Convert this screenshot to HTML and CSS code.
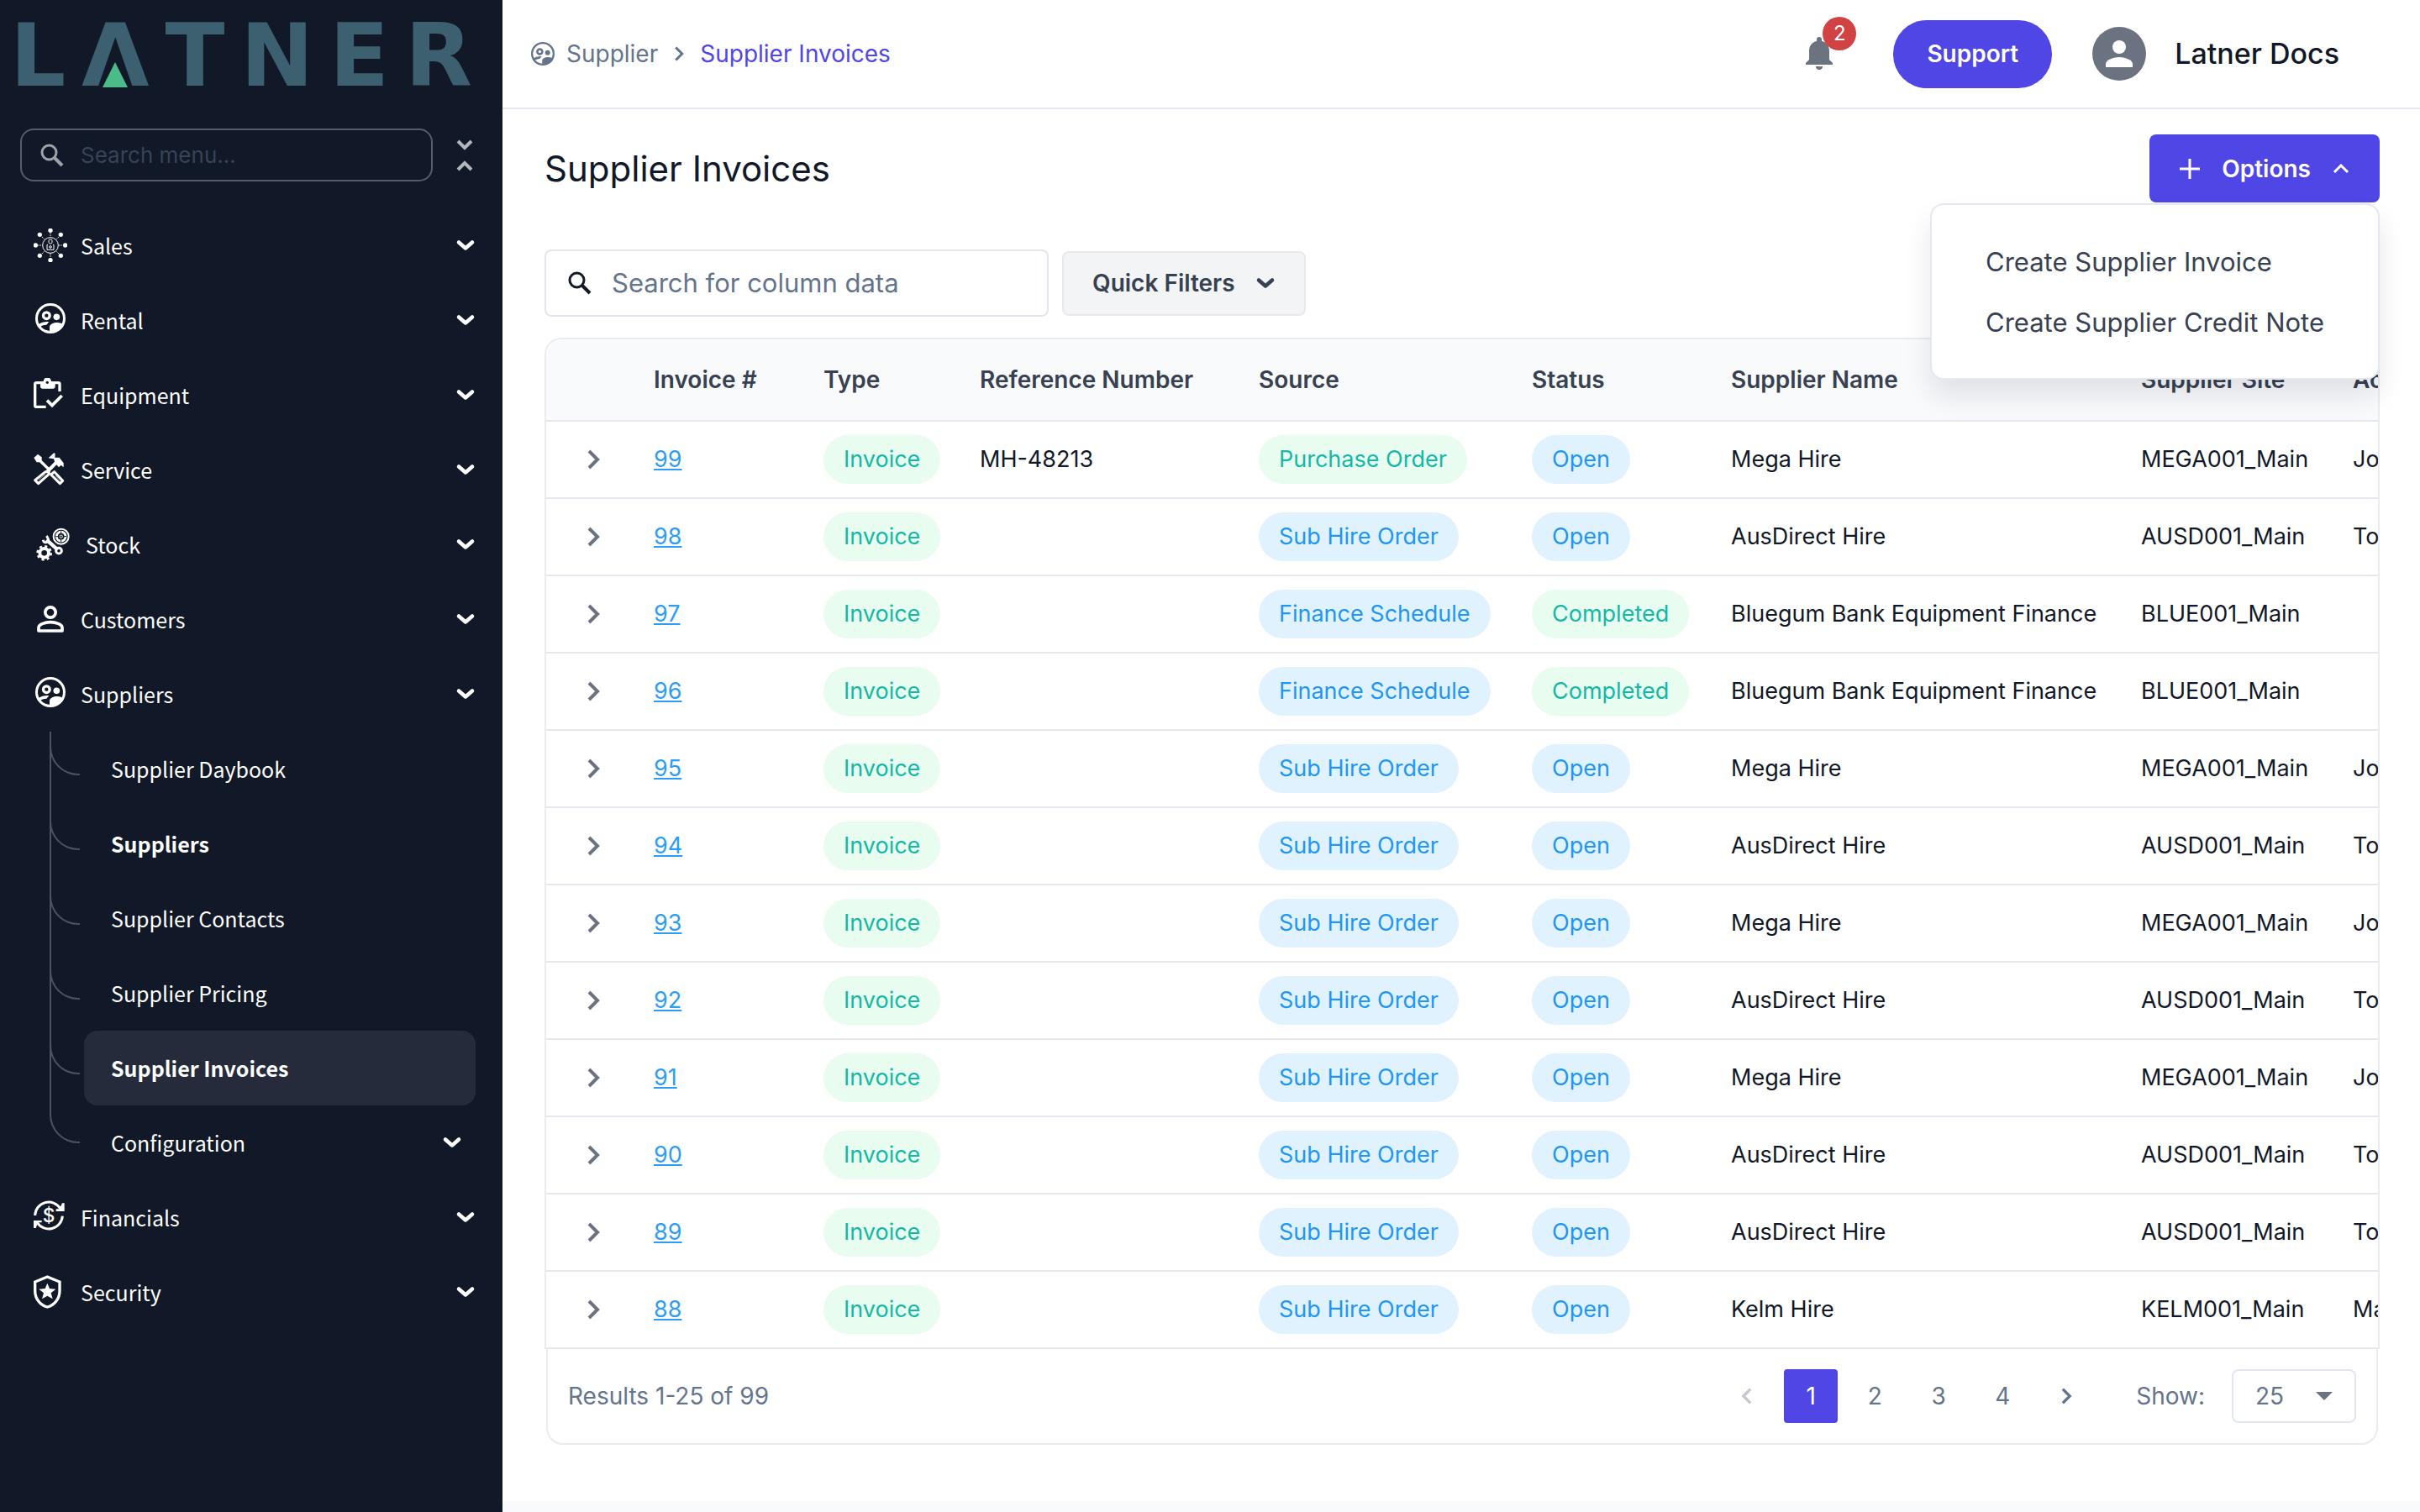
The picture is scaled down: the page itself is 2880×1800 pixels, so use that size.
FILE: index.html
```html
<!DOCTYPE html>
<html lang="en">
<head>
  <meta charset="UTF-8" />
  <meta name="viewport" content="width=device-width, initial-scale=1.0"/>
  <title>Supplier Invoices - Latner</title>
  <link rel="stylesheet" href="styles.css">
</head>
<body>
  <!-- Shared icons -->
  <svg class="sprite" aria-hidden="true">
    <symbol id="i-down" viewBox="0 0 24 24">
      <path d="M4 8.500l8 7 8-7" fill="none" stroke="currentColor" stroke-width="4.500" stroke-linecap="round" stroke-linejoin="round"/>
    </symbol>
    <symbol id="i-right" viewBox="0 0 24 24">
      <path d="M7 2l10 10L7 22" fill="none" stroke="currentColor" stroke-width="4"/>
    </symbol>
    <symbol id="i-left" viewBox="0 0 24 24">
      <path d="M17 2L7 12l10 10" fill="none" stroke="currentColor" stroke-width="4"/>
    </symbol>
    <symbol id="i-search" viewBox="0 0 28 28">
      <circle cx="10.500" cy="10.500" r="8.500" fill="none" stroke="currentColor" stroke-width="3"/>
      <path d="M17 17l9 9" fill="none" stroke="currentColor" stroke-width="4"/>
    </symbol>
    <symbol id="i-people" viewBox="0 0 120 120">
      <circle cx="60" cy="54" r="49.500" fill="none" stroke="currentColor" stroke-width="9"/>
      <circle cx="46" cy="44" r="11.500" fill="none" stroke="currentColor" stroke-width="10"/>
      <circle cx="82" cy="49" r="11.500" fill="currentColor"/>
      <path d="M57 104V84c2-10 14-15 27-15 10 0 18 3 24 8-5 16-24 28-51 27z" fill="currentColor"/>
      <path d="M13 80c8-10 22-14 42-14l-9 11c-10 0-19 3-27 11z" fill="currentColor"/>
    </symbol>
  </svg>

  <aside class="sidebar">
    <div class="logo" role="img" aria-label="Latner">
      <span>L</span><span class="logo-a">Λ</span><span>T</span><span>N</span><span>E</span><span>R</span>
    </div>

    <div class="menu-search">
      <label class="menu-search-box">
        <svg class="icon-28"><use href="#i-search"/></svg>
        <input type="text" placeholder="Search menu..." aria-label="Search menu">
      </label>
      <button class="collapse" aria-label="Collapse menu">
        <svg width="20" height="40" viewBox="0 0 20 40" fill="none" stroke="currentColor" stroke-width="4">
          <path d="M2 3l8 8 8-8M2 37l8-8 8 8"/>
        </svg>
      </button>
    </div>

    <nav class="nav">
      <a href="#" class="nav-item">
        <svg class="nav-icon" viewBox="0 0 120 120">
          <g fill="currentColor">
            <circle cx="60" cy="7" r="8"/><circle cx="60" cy="113" r="8"/>
            <circle cx="7" cy="60" r="8"/><circle cx="113" cy="60" r="8"/>
            <circle cx="22" cy="22" r="8"/><circle cx="97" cy="22" r="8"/>
            <circle cx="22" cy="97" r="8"/><circle cx="97" cy="97" r="8"/>
          </g>
          <g fill="none" stroke="currentColor" stroke-width="3">
            <circle cx="60" cy="60" r="28"/>
            <path stroke-dasharray="4 3" d="M60 16v14M60 90v14M16 60h14M90 60h14M30 30l9 9M90 30l-9 9M30 90l9-9M90 90l-9-9"/>
            <rect x="54" y="39" width="12" height="15" rx="5"/>
            <path d="M51 58h-3v18h24V58h-3"/>
            <circle cx="60" cy="66" r="4"/>
          </g>
        </svg>
        Sales
        <svg class="chev"><use href="#i-down"/></svg>
      </a>
      <a href="#" class="nav-item">
        <svg class="nav-icon"><use href="#i-people"/></svg>
        Rental
        <svg class="chev"><use href="#i-down"/></svg>
      </a>
      <a href="#" class="nav-item">
        <svg class="nav-icon" viewBox="0 0 120 120">
          <path d="M44 103H10q-5 0-5-5V22q0-5 5-5h78q5 0 5 5v26" fill="none" stroke="currentColor" stroke-width="10"/>
          <path d="M24 12h11a14 14 0 0 1 28 0h14v18q0 8-8 8H32q-8 0-8-8z" fill="currentColor"/>
          <circle cx="49" cy="16" r="5" fill="#111827"/>
          <path d="M48 80l18 18 35-35" fill="none" stroke="currentColor" stroke-width="11"/>
        </svg>
        Equipment
        <svg class="chev"><use href="#i-down"/></svg>
      </a>
      <a href="#" class="nav-item">
        <svg class="nav-icon" viewBox="0 0 120 120">
          <g fill="currentColor">
            <path d="M1 18L15 5l14 11v11l30 30-7 7-31-30H11z"/>
            <path d="M53 19L72 1l5 1-1 15h16l15 20v15l-9-8-8 8-8-9-31 31-9-9 33-33-3-10z"/>
          </g>
          <g fill="none" stroke="currentColor" stroke-width="9" stroke-linejoin="round">
            <path d="M42 68L5 98l12 12 38-34v-8z"/>
            <path d="M74 68l30 32-10 10-32-32z"/>
          </g>
          <path d="M17 98l25-22M78 82l17 18" stroke="currentColor" stroke-width="2"/>
        </svg>
        Service
        <svg class="chev"><use href="#i-down"/></svg>
      </a>
      <a href="#" class="nav-item">
        <svg class="nav-icon nav-icon-wide" viewBox="0 0 138 120">
          <g fill="none" stroke="currentColor">
            <circle cx="98" cy="32" r="27" stroke-width="6"/>
            <circle cx="98" cy="32" r="16" stroke-width="9"/>
            <circle cx="98" cy="32" r="5" stroke-width="3"/>
            <circle cx="38" cy="91" r="16" stroke-width="12"/>
            <circle cx="38" cy="91" r="24" stroke-width="8" stroke-dasharray="9 10"/>
            <path d="M46 44l40 35" stroke-width="13"/>
            <circle cx="90" cy="83" r="10" stroke-width="9"/>
            <path d="M34 44q2 12 12 9t6-12-6-11" stroke-width="9"/>
          </g>
          <path d="M98 13v12M98 39v12M79 32h12M105 32h12" stroke="#111827" stroke-width="3"/>
        </svg>
        Stock
        <svg class="chev"><use href="#i-down"/></svg>
      </a>
      <a href="#" class="nav-item">
        <svg class="nav-icon" viewBox="0 0 120 120">
          <g fill="none" stroke="currentColor" stroke-width="11">
            <circle cx="60" cy="36" r="18.500"/>
            <path d="M18 102V90c0-12 24-19 42-19s42 7 42 19v12z" stroke-linejoin="round"/>
          </g>
        </svg>
        Customers
        <svg class="chev"><use href="#i-down"/></svg>
      </a>
      <a href="#" class="nav-item">
        <svg class="nav-icon"><use href="#i-people"/></svg>
        Suppliers
        <svg class="chev"><use href="#i-down"/></svg>
      </a>

      <div class="subnav">
        <a href="#" class="sub-item">Supplier Daybook</a>
        <a href="#" class="sub-item bold">Suppliers</a>
        <a href="#" class="sub-item">Supplier Contacts</a>
        <a href="#" class="sub-item">Supplier Pricing</a>
        <a href="#" class="sub-item bold active">Supplier Invoices</a>
        <a href="#" class="sub-item">Configuration <svg class="chev"><use href="#i-down"/></svg></a>
      </div>

      <a href="#" class="nav-item">
        <svg class="nav-icon" viewBox="0 0 120 120">
          <g fill="none" stroke="currentColor" stroke-width="9">
            <path d="M5 54A49 49 0 0 1 96 30"/>
            <path d="M103 56A49 49 0 0 1 12 78"/>
          </g>
          <path d="M102 10h8v29H80v-8h12zM0 72h29v7H16L8 99H0z" fill="currentColor"/>
          <text x="54" y="78" text-anchor="middle" class="dollar">$</text>
        </svg>
        Financials
        <svg class="chev"><use href="#i-down"/></svg>
      </a>
      <a href="#" class="nav-item">
        <svg class="nav-icon" viewBox="0 0 120 120">
          <path d="M49 6l44 18v32c0 28-18 51-44 58C23 107 5 84 5 56V24z" fill="none" stroke="currentColor" stroke-width="10"/>
          <path d="M49 29l8 19 22 2-17 14 6 21-19-11-19 11 6-21-17-14 22-2z" fill="currentColor"/>
        </svg>
        Security
        <svg class="chev"><use href="#i-down"/></svg>
      </a>
    </nav>
  </aside>

  <div class="page">
    <header class="topbar">
      <div class="breadcrumb">
        <svg class="crumb-icon" viewBox="6 0 108 108"><use href="#i-people" width="120" height="120"/></svg>
        <a href="#">Supplier</a>
        <svg class="crumb-sep"><use href="#i-right"/></svg>
        <a href="#" class="current">Supplier Invoices</a>
      </div>

      <button class="bell" aria-label="Notifications">
        <svg width="32" height="40" viewBox="0 0 32 40" fill="currentColor">
          <path d="M16 0a3 3 0 0 1 3 3v2c6 1 9 6 9 12v10l4 4v2H0v-2l4-4V17C4 11 7 6 13 5V3a3 3 0 0 1 3-3zM12 35h8a4 4 0 0 1-8 0z"/>
        </svg>
        <span class="badge">2</span>
      </button>
      <button class="support">Support</button>
      <svg class="avatar" viewBox="0 0 64 64">
        <circle cx="32" cy="32" r="32" fill="#6b7280"/>
        <circle cx="32" cy="24" r="8" fill="#fff"/>
        <path d="M16 48v-4c0-5 10-8 16-8s16 3 16 8v4z" fill="#fff"/>
      </svg>
      <span class="user">Latner Docs</span>
    </header>

    <main class="content">
      <div class="title-row">
        <h1>Supplier Invoices</h1>
        <div class="options">
          <button class="options-btn">
            <svg width="24" height="24" viewBox="0 0 24 24"><path d="M12 0v24M0 12h24" stroke="currentColor" stroke-width="3"/></svg>
            Options
            <svg width="20" height="12" viewBox="0 0 20 12"><path d="M2 10l8-8 8 8" fill="none" stroke="currentColor" stroke-width="3"/></svg>
          </button>
          <div class="menu">
            <a href="#">Create Supplier Invoice</a>
            <a href="#">Create Supplier Credit Note</a>
          </div>
        </div>
      </div>

      <div class="toolbar">
        <label class="search">
          <svg class="icon-28"><use href="#i-search"/></svg>
          <input type="text" placeholder="Search for column data" aria-label="Search for column data">
        </label>
        <button class="filters">Quick Filters <svg class="chev"><use href="#i-down"/></svg></button>
      </div>

      <div class="table-wrap">
        <table>
          <colgroup>
            <col class="c-exp"><col class="c-num"><col class="c-type"><col class="c-ref"><col class="c-src">
            <col class="c-status"><col class="c-name"><col class="c-site"><col class="c-acc">
          </colgroup>
          <thead>
            <tr><th></th><th>Invoice #</th><th>Type</th><th>Reference Number</th><th>Source</th><th>Status</th><th>Supplier Name</th><th>Supplier Site</th><th>Account</th></tr>
          </thead>
          <tbody>
            <tr><td><button class="expand" aria-label="Expand"><svg><use href="#i-right"/></svg></button></td><td><a href="#">99</a></td><td><span class="pill green">Invoice</span></td><td>MH-48213</td><td><span class="pill green">Purchase Order</span></td><td><span class="pill blue">Open</span></td><td>Mega Hire</td><td>MEGA001_Main</td><td>John</td></tr>
            <tr><td><button class="expand" aria-label="Expand"><svg><use href="#i-right"/></svg></button></td><td><a href="#">98</a></td><td><span class="pill green">Invoice</span></td><td></td><td><span class="pill blue">Sub Hire Order</span></td><td><span class="pill blue">Open</span></td><td>AusDirect Hire</td><td>AUSD001_Main</td><td>Tom</td></tr>
            <tr><td><button class="expand" aria-label="Expand"><svg><use href="#i-right"/></svg></button></td><td><a href="#">97</a></td><td><span class="pill green">Invoice</span></td><td></td><td><span class="pill blue">Finance Schedule</span></td><td><span class="pill green">Completed</span></td><td>Bluegum Bank Equipment Finance</td><td>BLUE001_Main</td><td></td></tr>
            <tr><td><button class="expand" aria-label="Expand"><svg><use href="#i-right"/></svg></button></td><td><a href="#">96</a></td><td><span class="pill green">Invoice</span></td><td></td><td><span class="pill blue">Finance Schedule</span></td><td><span class="pill green">Completed</span></td><td>Bluegum Bank Equipment Finance</td><td>BLUE001_Main</td><td></td></tr>
            <tr><td><button class="expand" aria-label="Expand"><svg><use href="#i-right"/></svg></button></td><td><a href="#">95</a></td><td><span class="pill green">Invoice</span></td><td></td><td><span class="pill blue">Sub Hire Order</span></td><td><span class="pill blue">Open</span></td><td>Mega Hire</td><td>MEGA001_Main</td><td>John</td></tr>
            <tr><td><button class="expand" aria-label="Expand"><svg><use href="#i-right"/></svg></button></td><td><a href="#">94</a></td><td><span class="pill green">Invoice</span></td><td></td><td><span class="pill blue">Sub Hire Order</span></td><td><span class="pill blue">Open</span></td><td>AusDirect Hire</td><td>AUSD001_Main</td><td>Tom</td></tr>
            <tr><td><button class="expand" aria-label="Expand"><svg><use href="#i-right"/></svg></button></td><td><a href="#">93</a></td><td><span class="pill green">Invoice</span></td><td></td><td><span class="pill blue">Sub Hire Order</span></td><td><span class="pill blue">Open</span></td><td>Mega Hire</td><td>MEGA001_Main</td><td>John</td></tr>
            <tr><td><button class="expand" aria-label="Expand"><svg><use href="#i-right"/></svg></button></td><td><a href="#">92</a></td><td><span class="pill green">Invoice</span></td><td></td><td><span class="pill blue">Sub Hire Order</span></td><td><span class="pill blue">Open</span></td><td>AusDirect Hire</td><td>AUSD001_Main</td><td>Tom</td></tr>
            <tr><td><button class="expand" aria-label="Expand"><svg><use href="#i-right"/></svg></button></td><td><a href="#">91</a></td><td><span class="pill green">Invoice</span></td><td></td><td><span class="pill blue">Sub Hire Order</span></td><td><span class="pill blue">Open</span></td><td>Mega Hire</td><td>MEGA001_Main</td><td>John</td></tr>
            <tr><td><button class="expand" aria-label="Expand"><svg><use href="#i-right"/></svg></button></td><td><a href="#">90</a></td><td><span class="pill green">Invoice</span></td><td></td><td><span class="pill blue">Sub Hire Order</span></td><td><span class="pill blue">Open</span></td><td>AusDirect Hire</td><td>AUSD001_Main</td><td>Tom</td></tr>
            <tr><td><button class="expand" aria-label="Expand"><svg><use href="#i-right"/></svg></button></td><td><a href="#">89</a></td><td><span class="pill green">Invoice</span></td><td></td><td><span class="pill blue">Sub Hire Order</span></td><td><span class="pill blue">Open</span></td><td>AusDirect Hire</td><td>AUSD001_Main</td><td>Tom</td></tr>
            <tr><td><button class="expand" aria-label="Expand"><svg><use href="#i-right"/></svg></button></td><td><a href="#">88</a></td><td><span class="pill green">Invoice</span></td><td></td><td><span class="pill blue">Sub Hire Order</span></td><td><span class="pill blue">Open</span></td><td>Kelm Hire</td><td>KELM001_Main</td><td>Mary</td></tr>
          </tbody>
        </table>
      </div>

      <div class="table-footer">
        <span class="results">Results 1-25 of 99</span>
        <div class="pager">
          <button class="page-btn" aria-label="Previous page" disabled><svg><use href="#i-left"/></svg></button>
          <button class="page-btn selected">1</button>
          <button class="page-btn">2</button>
          <button class="page-btn">3</button>
          <button class="page-btn">4</button>
          <button class="page-btn" aria-label="Next page"><svg><use href="#i-right"/></svg></button>
        </div>
        <label for="page-size">Show:</label>
        <div class="select">
          <select id="page-size">
            <option>25</option>
            <option>50</option>
            <option>100</option>
          </select>
        </div>
      </div>
    </main>
  </div>
</body>
</html>
```
FILE: styles.css
```css
* {
  box-sizing: border-box;
}

body {
  margin: 0;
  min-height: 100vh;
  display: flex;
  font-family: Inter, sans-serif;
  font-size: 28px;
  line-height: 40px;
  color: #111827;
  background: #f8fafc;
}

a {
  color: inherit;
  text-decoration: none;
}

button {
  font: inherit;
  color: inherit;
  border: none;
  background: none;
  padding: 0;
  cursor: pointer;
}

input, select {
  font: inherit;
  color: inherit;
  border: none;
  outline: none;
  background: none;
  padding: 0;
  min-width: 0;
}

svg {
  flex: none;
  display: block;
}

.sprite {
  position: absolute;
  width: 0;
  height: 0;
}

.icon-28 {
  width: 28px;
  height: 28px;
}

.chev {
  width: 24px;
  height: 24px;
}

/* Sidebar */
.sidebar {
  flex: 0 0 598px;
  background: #111827;
  color: #fff;
}

.logo {
  display: flex;
  justify-content: space-between;
  padding: 24px 36px 0 12px;
  height: 128px;
  font-family: "DejaVu Sans", sans-serif;
  font-weight: 700;
  font-size: 104px;
  line-height: 84px;
  color: #3d6070;
}

.logo-a {
  position: relative;
}

.logo-a::after {
  content: "";
  position: absolute;
  left: 50%;
  top: 50px;
  border: 15px solid transparent;
  border-top: 0;
  border-bottom: 30px solid #4bbb89;
  transform: translateX(-50%);
}

.menu-search {
  display: flex;
  align-items: center;
  gap: 28px;
  padding: 25px 35px 32px 24px;
}

.menu-search-box {
  flex: 1;
  min-width: 0;
  display: flex;
  align-items: center;
  gap: 20px;
  height: 63px;
  padding: 0 22px;
  border: 2px solid #565c68;
  border-radius: 16px;
  color: #9fa3a9;
}

.menu-search-box input {
  flex: 1;
  width: 0;
  font-size: 26px;
}

.menu-search-box input::placeholder {
  color: #374357;
}

.collapse {
  color: #b3b6bc;
}

.nav {
  font-family: "Noto Sans CJK SC", sans-serif;
  font-size: 25px;
}

.nav-item {
  display: flex;
  align-items: center;
  gap: 16px;
  height: 89px;
  padding: 0 32px 2px 40px;
}

.nav-icon {
  width: 40px;
  height: 40px;
}

.nav-icon-wide {
  width: 46px;
}

.nav .chev {
  margin-left: auto;
}

.dollar {
  font: 500 68px Inter, sans-serif;
  fill: currentColor;
}

.subnav {
  margin: 0 32px 0 59px;
}

.sub-item {
  position: relative;
  display: flex;
  align-items: center;
  height: 89px;
  margin-left: 41px;
  padding: 0 16px 2px 32px;
  border-radius: 16px;
}

/* Tree lines */
.sub-item::before,
.sub-item::after {
  content: "";
  position: absolute;
  left: -41px;
  top: 0;
}

.sub-item::before {
  width: 34px;
  height: 50px;
  border-left: 2px solid #4b5260;
  border-bottom: 2px solid #4b5260;
  border-bottom-left-radius: 34px;
}

.sub-item::after {
  height: 89px;
  border-left: 2px solid #4b5260;
}

.sub-item:last-child::before {
  height: 43px;
}

.sub-item:last-child::after {
  display: none;
}

.sub-item.bold {
  font-weight: 700;
}

.sub-item.active {
  background: #252b3a;
}

/* Top bar */
.page {
  flex: 1;
  min-width: 0;
}

.topbar {
  display: flex;
  align-items: center;
  height: 130px;
  padding: 0 96px 0 34px;
  background: #fff;
  border-bottom: 2px solid #e5e8ee;
}

.breadcrumb {
  flex: 1;
  display: flex;
  align-items: center;
  color: #64748b;
}

.breadcrumb .current {
  color: #4f46e5;
}

.crumb-icon {
  width: 28px;
  height: 28px;
  margin-right: 14px;
}

.crumb-sep {
  width: 18px;
  height: 18px;
  margin: 0 16px;
}

.bell {
  position: relative;
  color: #6b7280;
  margin-right: 72px;
}

.badge {
  position: absolute;
  left: 20px;
  top: -24px;
  width: 40px;
  height: 40px;
  border-radius: 50%;
  background: #d14343;
  color: #fff;
  font-size: 24px;
}

.support {
  height: 81px;
  padding: 0 40px;
  border-radius: 40px;
  background: #4f46e5;
  color: #fff;
  font-weight: 600;
}

.avatar {
  width: 64px;
  height: 64px;
  margin: 0 34px 0 48px;
}

.user {
  font-size: 34px;
  font-weight: 500;
}

/* Content */
.content {
  padding: 30px 48px 67px 50px;
  background: #fff;
}

.title-row {
  display: flex;
  align-items: center;
  justify-content: space-between;
}

h1 {
  margin: 0;
  font-size: 42px;
  font-weight: 400;
}

.options {
  position: relative;
}

.options-btn {
  display: flex;
  align-items: center;
  gap: 26px;
  height: 81px;
  padding: 0 36px;
  border-radius: 8px;
  background: #4f46e5;
  color: #fff;
  font-weight: 600;
}

.menu {
  position: absolute;
  right: 0;
  top: 82px;
  z-index: 10;
  padding: 32px 64px 30px;
  border: 2px solid #e5e8f0;
  border-radius: 16px;
  background: #fff;
  box-shadow: 0 20px 32px rgba(17, 24, 39, 0.1);
  color: #374151;
  font-size: 31px;
  white-space: nowrap;
}

.menu a {
  display: block;
  line-height: 72px;
}

.toolbar {
  display: flex;
  align-items: center;
  gap: 16px;
  margin: 56px 0 25px;
}

.search {
  flex: 0 1 600px;
  min-width: 0;
  display: flex;
  align-items: center;
  gap: 24px;
  height: 80px;
  padding: 0 26px;
  border: 2px solid #e2e6ee;
  border-radius: 8px;
}

.search input {
  flex: 1;
  width: 0;
  font-size: 31px;
}

.search input::placeholder {
  color: #64748b;
}

.filters {
  display: flex;
  align-items: center;
  gap: 24px;
  height: 77px;
  padding: 0 34px;
  border: 2px solid #e7e9ed;
  border-radius: 8px;
  background: #f2f4f6;
  color: #374151;
  font-weight: 600;
}

/* Table */
.table-wrap {
  overflow: hidden;
  border: 2px solid #e9ebef;
  border-bottom: none;
  border-radius: 20px 20px 0 0;
}

table {
  table-layout: fixed;
  width: 2426px;
  border-collapse: separate;
  border-spacing: 0;
}

.c-exp { width: 104px; }
.c-num { width: 202px; }
.c-type { width: 186px; }
.c-ref { width: 332px; }
.c-src { width: 325px; }
.c-status { width: 237px; }
.c-name { width: 488px; }
.c-site { width: 252px; }
.c-acc { width: 300px; }

th, td {
  padding: 0 24px;
  text-align: left;
  white-space: nowrap;
  border-bottom: 2px solid #e5e8ee;
}

th {
  height: 98px;
  background: #f9fafc;
  color: #374151;
  font-weight: 600;
}

td {
  height: 92px;
  font-size: 27px;
}

td a {
  color: #2b9df4;
  text-decoration: underline;
}

.expand {
  display: block;
  margin-left: 20px;
  color: #6b7280;
}

.expand svg {
  width: 24px;
  height: 24px;
}

.pill {
  display: inline-block;
  padding: 0 24px;
  line-height: 58px;
  border-radius: 29px;
}

.pill.green {
  background: #e9fcf0;
  color: #14b8a6;
}

.pill.blue {
  background: #e0f2fe;
  color: #2196f3;
}

.table-footer {
  display: flex;
  align-items: center;
  height: 114px;
  margin: 0 2px;
  padding: 0 24px;
  border: 2px solid #e9ebef;
  border-top: none;
  border-radius: 0 0 20px 20px;
  color: #64748b;
}

.results {
  flex: 1;
}

.pager {
  display: flex;
  gap: 12px;
  margin-right: 51px;
}

.page-btn {
  display: flex;
  align-items: center;
  justify-content: center;
  width: 64px;
  height: 64px;
  border-radius: 4px;
}

.page-btn svg {
  width: 20px;
  height: 20px;
}

.page-btn:disabled {
  color: #c3c7d0;
}

.page-btn.selected {
  background: #4f46e5;
  color: #fff;
}

.select {
  position: relative;
  margin-left: 32px;
}

.select select {
  appearance: none;
  width: 148px;
  height: 64px;
  padding: 0 26px;
  border: 2px solid #e2e6ee;
  border-radius: 8px;
}

.select::after {
  content: "";
  position: absolute;
  right: 28px;
  top: 27px;
  border: 10px solid transparent;
  border-top-color: #6b7280;
  border-bottom: 0;
  pointer-events: none;
}
```
